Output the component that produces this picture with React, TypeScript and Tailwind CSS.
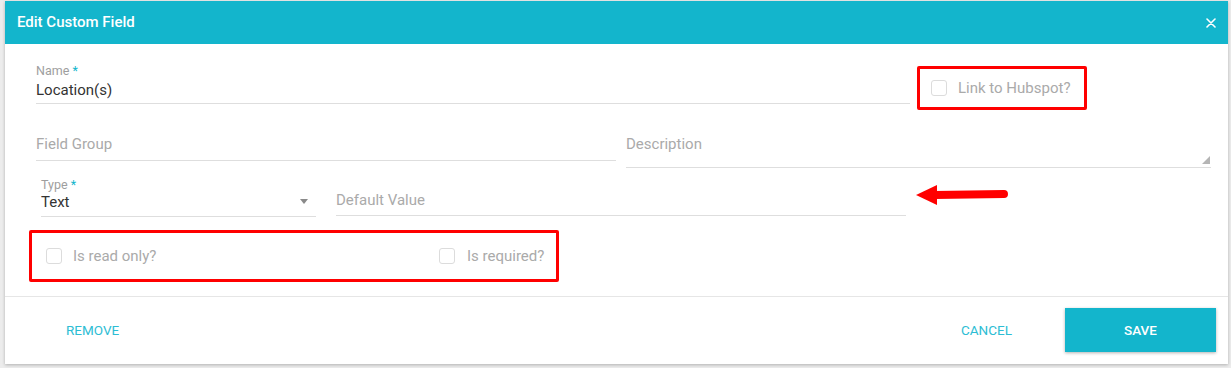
import React from "react";

const Checkbox = () => (
  <span className="inline-block w-4 h-4 border border-[#dcdcdc] rounded-[3px] bg-white shrink-0" />
);

export default function App() {
  return (
    <div
      className="relative w-[1231px] h-[368px] bg-[#ececec] pt-[1px] pl-[5px] overflow-hidden"
      style={{ fontFamily: "Roboto, 'Noto Sans', sans-serif" }}
    >
      <div className="relative w-[1223px] h-[363px] bg-white shadow-[0_1px_3px_rgba(0,0,0,0.25)] flex flex-col">
        {/* Header */}
        <div className="h-[43px] bg-[#13b5cc] flex items-center justify-between pl-[12px] pr-[12px] shrink-0">
          <span className="text-white text-[15px] font-medium">Edit Custom Field</span>
          <svg width="10" height="10" viewBox="0 0 10 10">
            <path d="M1 1 L9 9 M9 1 L1 9" stroke="white" strokeWidth="1.6" strokeLinecap="round" />
          </svg>
        </div>

        {/* Body */}
        <div className="flex flex-col">
          {/* Row 1 */}
          <div className="flex items-start">
            <div className="ml-[31px] w-[874px] pt-[20px] border-b border-[#dedede] pb-[3px]">
              <div className="text-[12.5px] leading-[14px] text-[#9e9e9e]">
                Name <span className="text-[#13b5cc]">*</span>
              </div>
              <div className="mt-[2px] text-[15px] leading-[20px] text-[#333]">Location(s)</div>
            </div>
            <div className="ml-[7px] mt-[22px] w-[170px] h-[44px] border-[3px] border-[#ff0000] rounded-[2px] flex items-center pl-[11px] gap-[11px]">
              <Checkbox />
              <span className="text-[15px] text-[#aaaaaa]">Link to Hubspot?</span>
            </div>
          </div>

          {/* Row 2 */}
          <div className="flex items-start mt-[24px]">
            <div className="ml-[31px] w-[580px] h-[27px] border-b border-[#dedede] text-[15px] leading-[20px] text-[#aaaaaa]">
              Field Group
            </div>
            <div className="relative ml-[10px] w-[585px] h-[34px] border-b border-[#dedede] text-[15px] leading-[20px] text-[#aaaaaa]">
              Description
              <svg width="8" height="8" viewBox="0 0 8 8" className="absolute right-[1px] bottom-[3px]">
                <path d="M8 0 L8 8 L0 8 Z" fill="#b5b5b5" />
              </svg>
            </div>
          </div>

          {/* Row 3 */}
          <div className="flex items-start mt-[10px]">
            <div className="relative ml-[36px] w-[275px] border-b border-[#dedede] pb-[4px]">
              <div className="text-[12.5px] leading-[14px] text-[#9e9e9e]">
                Type <span className="text-[#13b5cc]">*</span>
              </div>
              <div className="text-[15px] leading-[20px] text-[#333]">Text</div>
              <svg width="8" height="5" viewBox="0 0 8 5" className="absolute right-[8px] top-[21px]">
                <path d="M0 0 L8 0 L4 5 Z" fill="#8a8a8a" />
              </svg>
            </div>
            <div className="ml-[20px] mt-[12px] w-[570px] h-[26px] border-b border-[#dedede] text-[15px] leading-[20px] text-[#aaaaaa]">
              Default Value
            </div>
          </div>

          {/* Row 4 */}
          <div className="flex mt-[13px]">
            <div className="ml-[24px] w-[530px] h-[52px] border-[3px] border-[#ff0000] rounded-[2px] flex items-center pl-[14px]">
              <Checkbox />
              <span className="ml-[11px] text-[15px] text-[#aaaaaa] w-[366px]">Is read only?</span>
              <Checkbox />
              <span className="ml-[12px] text-[15px] text-[#aaaaaa]">Is required?</span>
            </div>
          </div>
        </div>

        {/* Footer */}
        <div className="mt-[14px] border-t border-[#e6e6e6] flex items-center h-[67px] pr-[12px]">
          <span className="ml-[61px] text-[13.5px] text-[#2dbdd4] uppercase">Remove</span>
          <span className="ml-auto text-[13.5px] text-[#2dbdd4] uppercase">Cancel</span>
          <div className="ml-[53px] w-[151px] h-[44px] bg-[#13b5cc] shadow-[0_1px_3px_rgba(0,0,0,0.3)] flex items-center justify-center text-white text-[13.5px] font-medium uppercase">
            Save
          </div>
        </div>

        {/* Annotation arrow */}
        <svg
          width="94"
          height="24"
          viewBox="0 0 94 24"
          className="absolute left-[910px] top-[182px]"
        >
          <path d="M1 12 L22 2 L22 22 Z" fill="#ff0000" />
          <path d="M20 12 L89 11" stroke="#ff0000" strokeWidth="8" strokeLinecap="round" />
        </svg>
      </div>
    </div>
  );
}
